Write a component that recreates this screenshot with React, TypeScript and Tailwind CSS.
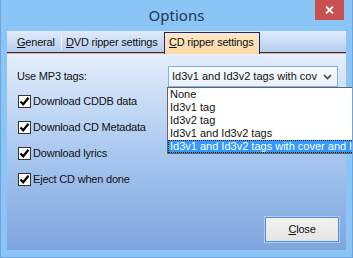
import React from 'react';

const Check = () => (
  <span className="flex h-[13px] w-[13px] shrink-0 items-center justify-center border border-[#333] bg-white">
    <svg width="11" height="11" viewBox="0 0 11 11">
      <path d="M1.5 5.5 L4.2 8.3 L9.5 1.8" fill="none" stroke="#000" strokeWidth="2.2" />
    </svg>
  </span>
);

const options = ['None', 'Id3v1 tag', 'Id3v2 tag', 'Id3v1 and Id3v2 tags', 'Id3v1 and Id3v2 tags with cover and lyrics'];

export default function App() {
  const checks = ['Download CDDB data', 'Download CD Metadata', 'Download lyrics', 'Eject CD when done'];

  return (
    <div className="relative h-[258px] w-[353px] overflow-hidden border-x border-b border-[#6ea4d8] bg-[#8ac5f6] font-['Liberation_Sans',sans-serif] text-[11px] tracking-[-0.2px] text-[#111]">
      {/* title bar */}
      <div className="relative flex h-[31px] items-center justify-center pb-[1px]">
        <span className="font-['Noto_Sans',sans-serif] text-[15px] tracking-normal text-[#1f3652]">Options</span>
        <div className="absolute right-[8px] top-0 flex h-[20px] w-[29px] items-center justify-center bg-[#c75050]">
          <svg width="9" height="8" viewBox="0 0 9 8">
            <path d="M1 0.5 L8 7.5 M8 0.5 L1 7.5" stroke="#fff" strokeWidth="1.8" />
          </svg>
        </div>
      </div>

      {/* tabs */}
      <div className="mx-[6px] flex h-[21px] items-end whitespace-nowrap bg-gradient-to-b from-[#e1ecfb] to-[#b6cdee]">
        <div className="flex h-[20px] w-[54px] items-center pl-[10px]">
          <span><span className="underline">G</span>eneral</span>
        </div>
        <div className="mb-[2px] h-[16px] w-px bg-[#f4f8fd]" />
        <div className="flex h-[20px] w-[102px] items-center pl-[4px]">
          <span><span className="underline">D</span>VD ripper settings</span>
        </div>
        <div className="relative -mb-[2px] flex h-[22px] w-[96px] items-center border-x border-t border-[#1a2877] bg-gradient-to-b from-[#fee9c8] to-[#fcd8a6] pb-[2px] pl-[4px]">
          <span><span className="underline">C</span>D ripper settings</span>
        </div>
      </div>
      <div className="mx-[6px] h-px bg-[#1a2877]" />
      <div className="mx-[6px] h-px bg-[#f6b366]" />

      {/* panel */}
      <div className="relative mx-[6px] flex h-[196px] flex-col bg-gradient-to-b from-[#e5eefb] via-[#a9c8f0] to-[#7ea5de] pl-[10px] pt-[12px]">
        <div className="flex h-[21px] items-center">
          <span className="w-[151px]">Use MP3 tags:</span>
          <div className="flex h-[21px] w-[170px] items-center justify-between border border-[#7db3ea] bg-gradient-to-b from-[#f7fafe] to-[#e9f1fb] pl-[3px] pr-[5px] tracking-normal">
            <span className="overflow-hidden whitespace-nowrap">Id3v1 and Id3v2 tags with cov</span>
            <svg width="9" height="6" viewBox="0 0 9 6" className="shrink-0">
              <path d="M1 1 L4.5 4.5 L8 1" fill="none" stroke="#444" strokeWidth="1.6" />
            </svg>
          </div>
        </div>

        <div className="mt-[1px] flex flex-col pl-[1px]">
          {checks.map((c) => (
            <div key={c} className="flex h-[26px] items-center gap-[2px] whitespace-nowrap">
              <Check />
              <span>{c}</span>
            </div>
          ))}
        </div>

        <button className="mr-[7px] mt-[25px] flex h-[25px] w-[74px] items-center justify-center self-end border border-[#3399ff] bg-gradient-to-b from-[#f2f2f2] to-[#e5e5e5] outline outline-1 outline-[#c8c8c8]">
          <span><span className="underline">C</span>lose</span>
        </button>

        {/* open dropdown list */}
        <div className="absolute left-[160px] top-[33px] w-[192px] border border-[#646464] bg-white tracking-normal">
          {options.map((o, i) => (
            <div
              key={o}
              className={
                i === 4
                  ? 'flex h-[13px] items-center whitespace-nowrap border border-dotted border-[#222] bg-[#3399ff] pl-[1px] text-white'
                  : 'flex h-[13px] items-center whitespace-nowrap pl-[2px]'
              }
            >
              {o}
            </div>
          ))}
        </div>
      </div>
    </div>
  );
}
